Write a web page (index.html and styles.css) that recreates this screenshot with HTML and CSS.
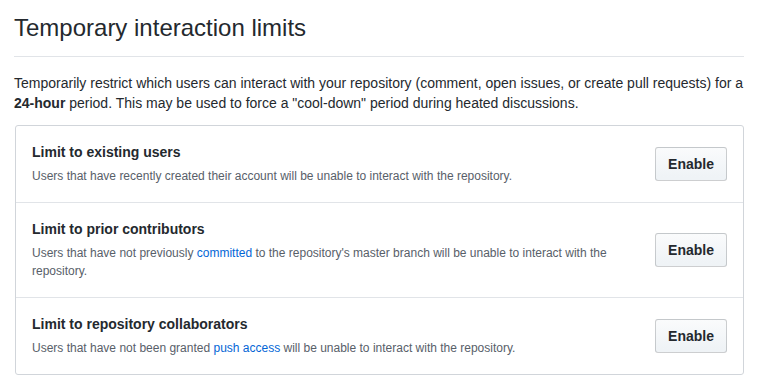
FILE: index.html
```html
<!DOCTYPE html>
<html>
<head>
<meta charset="utf-8">
<link rel="stylesheet" href="styles.css">
</head>
<body>
<div class="page">
  <div class="subhead">
    <h2 class="subhead-heading">Temporary interaction limits</h2>
  </div>
  <p class="intro">Temporarily restrict which users can interact with your repository (comment, open issues, or create pull requests) for a <strong>24-hour</strong> period. This may be used to force a "cool-down" period during heated discussions.</p>
  <div class="box">
    <div class="row">
      <div class="info">
        <div class="title">Limit to existing users</div>
        <div class="desc">Users that have recently created their account will be unable to interact with the repository.</div>
      </div>
      <button class="btn">Enable</button>
    </div>
    <div class="row">
      <div class="info">
        <div class="title">Limit to prior contributors</div>
        <div class="desc">Users that have not previously <a href="#">committed</a> to the repository's master branch will be unable to interact with the repository.</div>
      </div>
      <button class="btn">Enable</button>
    </div>
    <div class="row">
      <div class="info">
        <div class="title">Limit to repository collaborators</div>
        <div class="desc">Users that have not been granted <a href="#">push access</a> will be unable to interact with the repository.</div>
      </div>
      <button class="btn">Enable</button>
    </div>
  </div>
</div>
</body>
</html>
```
FILE: styles.css
```css
html, body {
  margin: 0;
  padding: 0;
  background: #fff;
}
body {
  font-family: "Liberation Sans", Arial, sans-serif;
  color: #24292e;
  font-size: 14px;
  line-height: 20px;
}
.page {
  padding: 0 15px 0 14px;
}
.subhead {
  padding-top: 10px;
  padding-bottom: 10px;
  border-bottom: 1px solid #e1e4e8;
}
.subhead-heading {
  margin: 0;
  font-size: 24px;
  font-weight: 400;
  line-height: 36px;
}
.intro {
  margin: 16px 0 12px;
  font-size: 14px;
  line-height: 20px;
}
.intro strong {
  font-weight: 700;
}
.box {
  border: 1px solid #d1d5da;
  border-radius: 3px;
  margin-left: 1px;
}
.row {
  display: flex;
  align-items: center;
  gap: 16px;
  padding: 16px 16px 17px;
  border-top: 1px solid #e1e4e8;
}
.row:first-child {
  border-top: 0;
}
.info {
  flex: 1;
  min-width: 0;
}
.title {
  font-weight: 700;
  font-size: 14px;
  line-height: 20px;
}
.desc {
  margin-top: 5px;
  font-size: 12px;
  line-height: 18px;
  color: #586069;
}
.desc a {
  color: #0366d6;
  text-decoration: none;
}
.btn {
  flex: none;
  font-family: inherit;
  font-size: 14px;
  font-weight: 700;
  line-height: 20px;
  color: #24292e;
  padding: 6px 12px;
  border: 1px solid rgba(27, 31, 35, 0.2);
  border-radius: 3px;
  background-color: #eff3f6;
  background-image: linear-gradient(-180deg, #fafbfc 0%, #eff3f6 90%);
}
```
